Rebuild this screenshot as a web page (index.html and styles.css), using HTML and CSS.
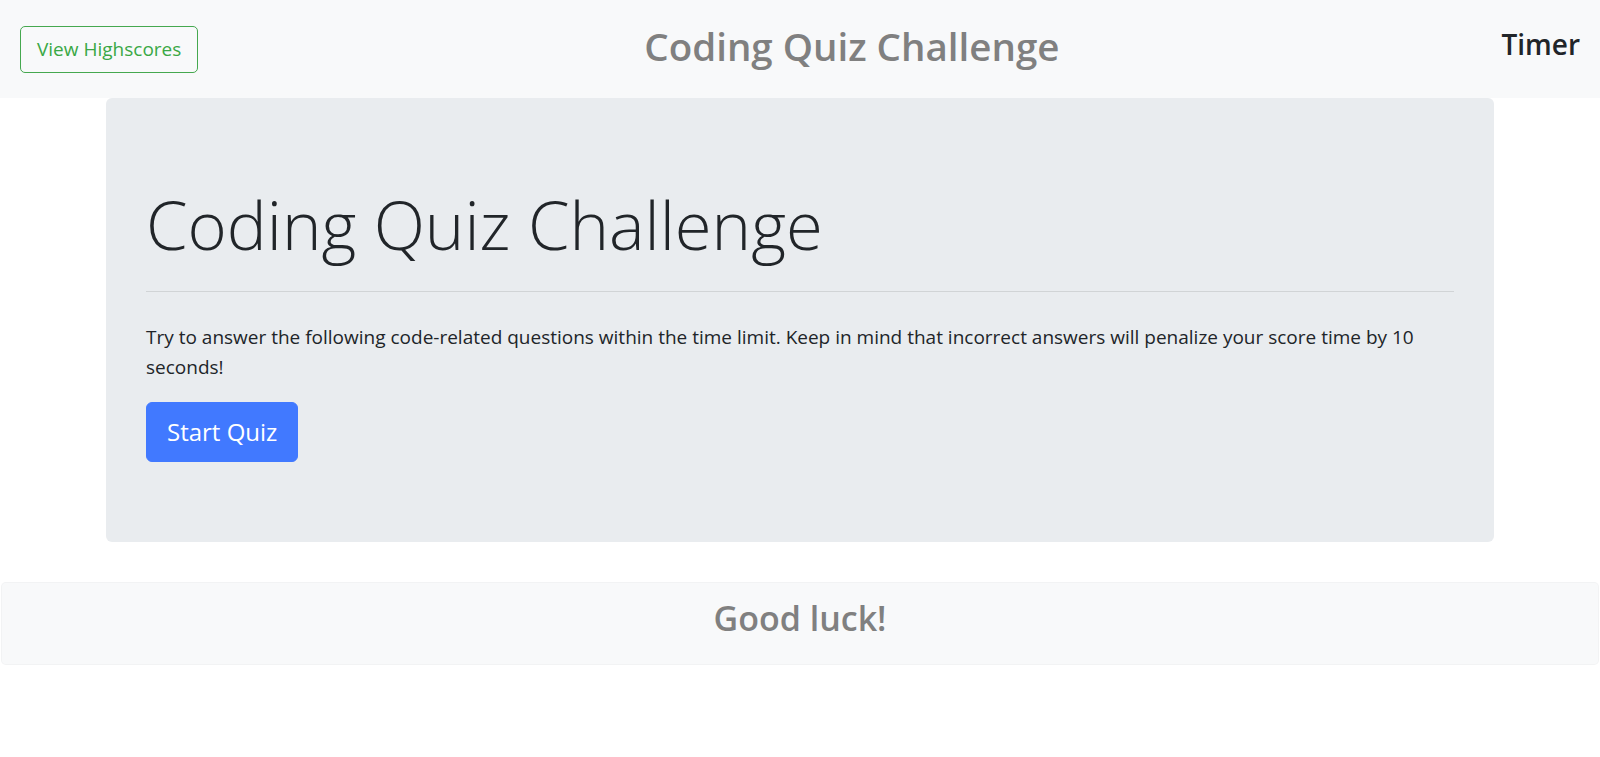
FILE: index.html
```html
<!DOCTYPE html>
<html lang="en">
<head>
<meta charset="utf-8">
<title>Coding Quiz Challenge</title>
<link rel="stylesheet" href="styles.css">
</head>
<body>
<header class="topbar">
  <button class="btn-outline">View Highscores</button>
  <h2 class="topbar-title">Coding Quiz Challenge</h2>
  <h4 class="timer">Timer</h4>
</header>
<main class="container">
  <section class="jumbotron">
    <h1 class="display">Coding Quiz Challenge</h1>
    <hr class="divider">
    <p class="intro">Try to answer the following code-related questions within the time limit. Keep in mind that incorrect answers will penalize your score time by 10 seconds!</p>
    <button class="btn-primary">Start Quiz</button>
  </section>
</main>
<footer class="footer-card">
  <h3 class="footer-text">Good luck!</h3>
</footer>
</body>
</html>
```

FILE: styles.css
```css
* { box-sizing: border-box; }
html, body { margin: 0; padding: 0; }
body {
  font-family: "Open Sans", "Noto Sans", sans-serif;
  font-size: 20px;
  line-height: 1.5;
  color: #212529;
  background: #fff;
}
.topbar {
  display: flex;
  align-items: center;
  justify-content: space-between;
  height: 98px;
  padding: 0 20px;
  background: #f8f9fa;
}
.btn-outline {
  font-family: inherit;
  font-size: 19px;
  line-height: 1.5;
  color: #3aa845;
  background: transparent;
  border: 1px solid #45a84f;
  border-radius: 5px;
  padding: 7px 16px;
  height: 47px;
}
.topbar-title {
  margin: 0;
  font-size: 38.5px;
  font-weight: 600;
  line-height: 1.2;
  color: #808080;
  position: relative;
  left: 2px;
  top: -3px;
}
.timer {
  margin: 0;
  font-size: 28px;
  font-weight: 600;
  line-height: 1.2;
  color: #212529;
  position: relative;
  top: -4px;
}
.container {
  width: 1388px;
  margin: 0 auto;
}
.jumbotron {
  background: #e9ecef;
  border-radius: 6px;
  padding: 80px 40px;
  margin-bottom: 40px;
}
.display {
  margin: 0 0 9px;
  font-size: 67px;
  font-weight: 300;
  line-height: 93px;
  color: #212529;
}
.divider {
  border: 0;
  border-top: 1px solid rgba(0,0,0,0.1);
  margin: 20px 0 30px;
}
.intro {
  margin: 0 0 20px;
  font-size: 19px;
  line-height: 30px;
}
.btn-primary {
  font-family: inherit;
  font-size: 24px;
  line-height: 1.5;
  color: #fff;
  background: #4179ff;
  border: 1px solid #4179ff;
  border-radius: 6px;
  padding: 10px 20px;
  height: 60px;
}
.footer-card {
  margin: 0 1px;
  background: #f8f9fa;
  border: 1px solid rgba(0,0,0,0.025);
  border-radius: 5px;
  padding: 15px;
  height: 83px;
  text-align: center;
}
.footer-text {
  margin: 0 0 10px;
  font-size: 34px;
  font-weight: 600;
  line-height: 1.2;
  color: #808080;
}
```
